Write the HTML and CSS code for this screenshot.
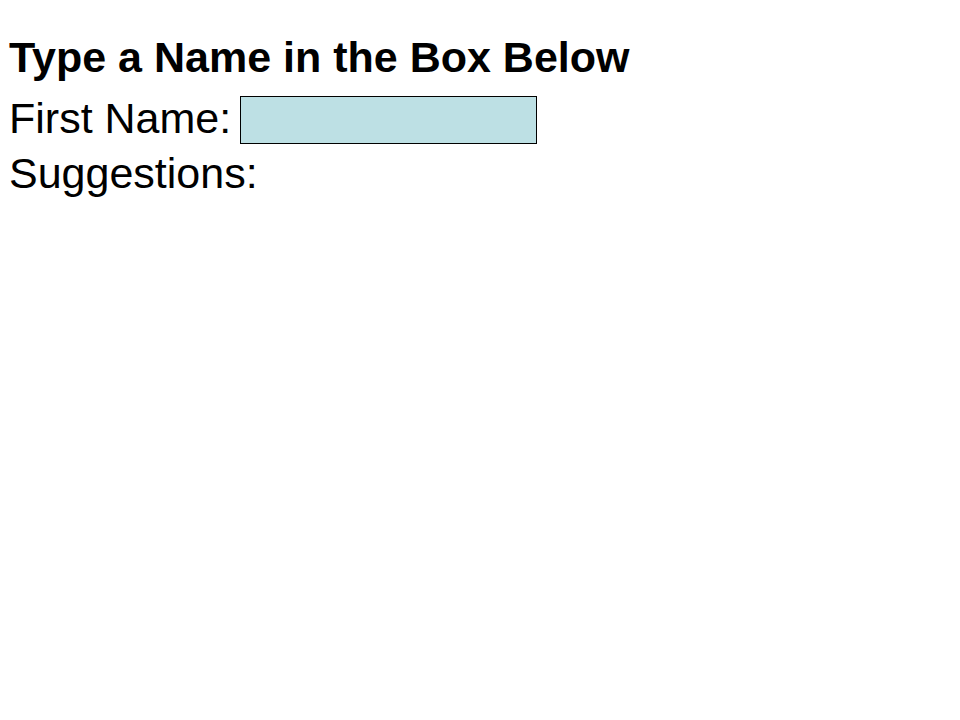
FILE: index.html
```html
<!DOCTYPE html>
<html>
<head>
<meta charset="utf-8">
<link rel="stylesheet" href="styles.css">
</head>
<body>
<div class="page">
  <h1 class="title">Type a Name in the Box Below</h1>
  <form class="row">
    <label class="label" for="fname">First Name:</label>
    <input class="box" id="fname" type="text">
  </form>
  <p class="label suggest">Suggestions:</p>
</div>
</body>
</html>
```
FILE: styles.css
```css
html, body {
  margin: 0;
  padding: 0;
  background: #ffffff;
}
.page {
  padding: 33px 0 0 9px;
  font-family: "Liberation Sans", Arial, sans-serif;
  color: #000;
}
.title {
  margin: 0;
  font-size: 43px;
  font-weight: bold;
  line-height: 48px;
}
.row {
  display: grid;
  grid-template-columns: 231px 297px;
  align-items: start;
  margin: 13px 0 0 0;
}
.label {
  display: block;
  margin: 0;
  font-size: 43px;
  line-height: 48px;
  white-space: nowrap;
}
.box {
  width: 297px;
  height: 48px;
  box-sizing: border-box;
  border: 1px solid #000;
  background: #bde0e4;
  margin: 2px 0 0 0;
  padding: 0;
}
.suggest {
  margin-top: 5px;
}
```
